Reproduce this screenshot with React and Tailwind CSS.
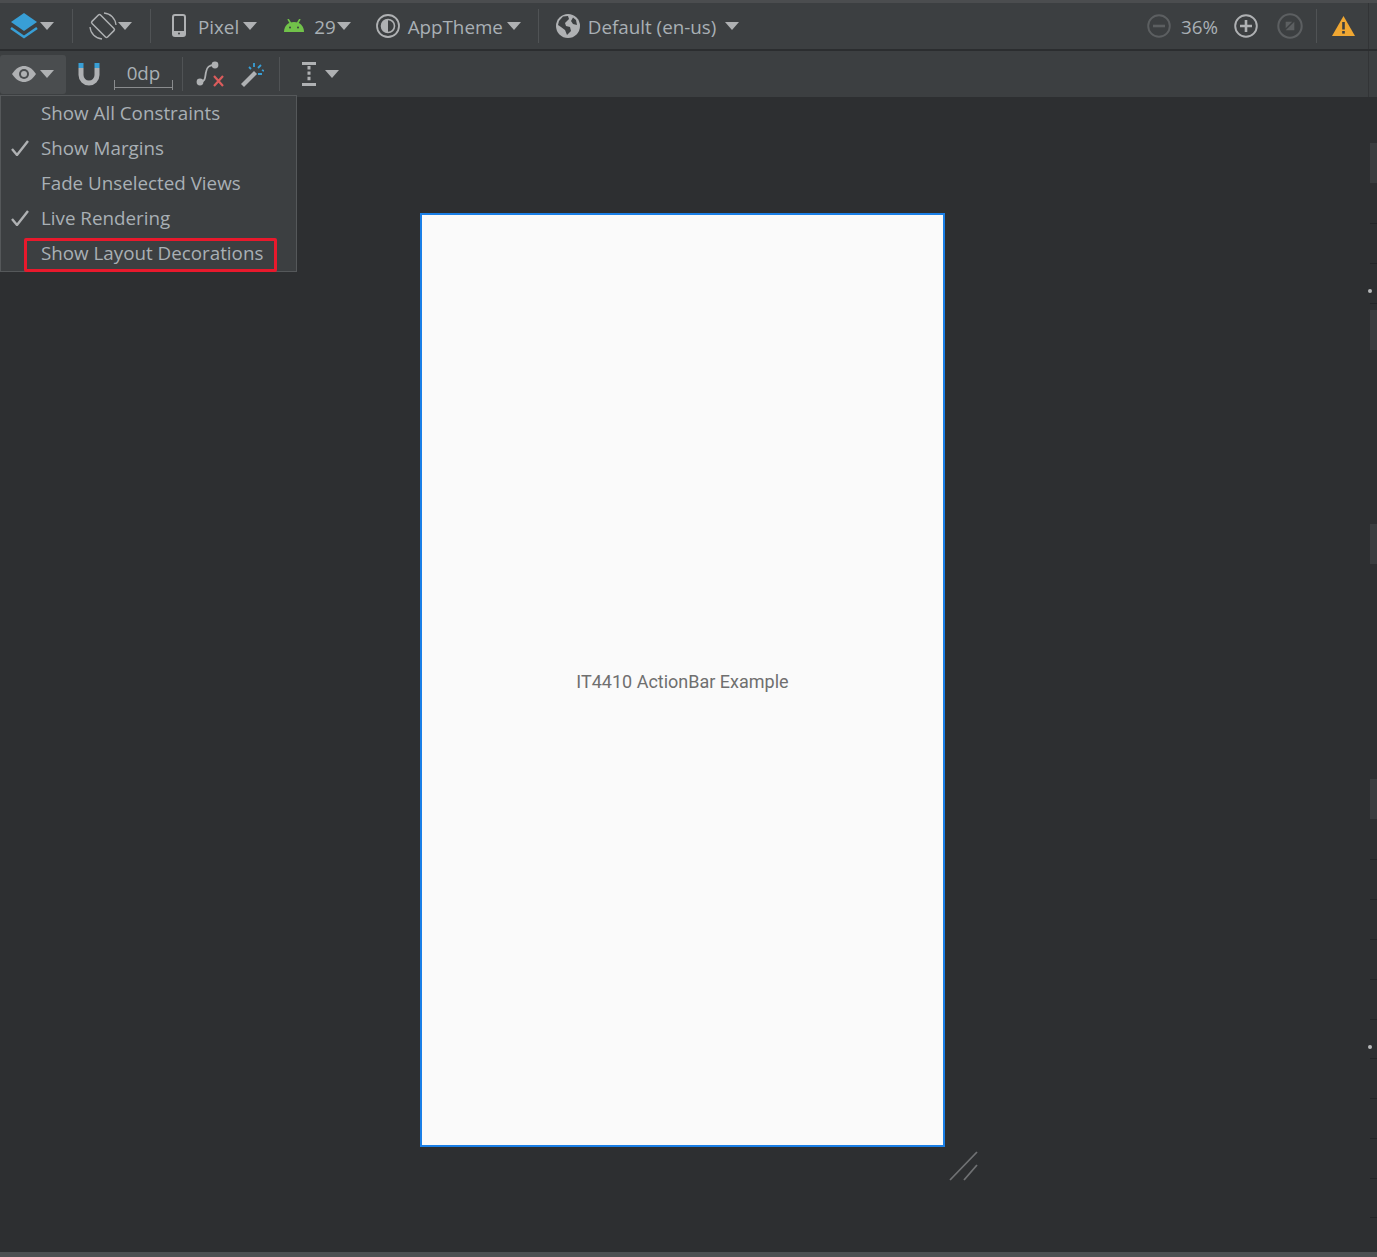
const textFont = "font-['Open_Sans','Noto_Sans',sans-serif]";

const RULER_BLOCKS = [143, 310, 524, 779];
const RULER_TICKS = [223, 263, 303, 859, 899, 939, 979, 1019, 1058, 1098, 1138, 1178, 1217];
const RULER_DOTS = [289, 1045];

function Caret({ className = '' }) {
  return (
    <svg width="14" height="8" viewBox="0 0 14 8" className={'shrink-0 ' + className}>
      <path d="M0 0H14L7 8Z" fill="#afb1b3" />
    </svg>
  );
}

function Divider({ className = '' }) {
  return <div className={'w-px h-[34px] shrink-0 bg-[#505355] ' + className} />;
}

function Label({ className = '', children }) {
  return <span className={'text-[18.8px] leading-none whitespace-nowrap text-[#a9b0b5] shrink-0 ' + textFont + ' ' + className}>{children}</span>;
}

function LayersIcon() {
  return (
    <svg width="28" height="26" viewBox="0 0 28 26" className="ml-[10px] shrink-0">
      <path d="M14 0L27 9L14 18L1 9Z" fill="#389fd6" />
      <path d="M1 15L14 24L27 15" fill="none" stroke="#389fd6" strokeWidth="2.6" />
    </svg>
  );
}

function RotateIcon() {
  return (
    <svg width="28" height="28" viewBox="0 0 28 28" className="ml-[16px] shrink-0">
      <rect x="8" y="3" width="12" height="22" rx="1.5" transform="rotate(-45 14 14)" fill="none" stroke="#afb1b3" strokeWidth="1.5" />
      <path d="M15 1A13 13 0 0 1 27 13M1 15A13 13 0 0 0 13 27" fill="none" stroke="#afb1b3" strokeWidth="1.3" />
    </svg>
  );
}

function PhoneIcon() {
  return (
    <svg width="14" height="24" viewBox="0 0 14 24" className="ml-[21px] shrink-0">
      <rect x="1" y="1" width="12" height="21" rx="2" fill="none" stroke="#afb1b3" strokeWidth="2" />
      <rect x="1" y="17" width="12" height="5" fill="#afb1b3" />
      <circle cx="7" cy="19.5" r="1" fill="#3c3f41" />
    </svg>
  );
}

function AndroidIcon() {
  return (
    <svg width="20" height="14" viewBox="0 0 20 14" className="ml-[27px] shrink-0">
      <path d="M0 13C0 7 4 3 10 3C16 3 20 7 20 13Z" fill="#71c24a" />
      <path d="M4 0L7 5M16 0L13 5" stroke="#71c24a" strokeWidth="1.6" />
      <circle cx="6" cy="8.5" r="1" fill="#3c3f41" />
      <circle cx="14" cy="8.5" r="1" fill="#3c3f41" />
    </svg>
  );
}

function ThemeIcon() {
  return (
    <svg width="24" height="24" viewBox="0 0 24 24" className="ml-[25px] shrink-0">
      <circle cx="12" cy="12" r="11" fill="none" stroke="#afb1b3" strokeWidth="1.8" />
      <circle cx="12" cy="12" r="6.5" fill="none" stroke="#afb1b3" strokeWidth="1.6" />
      <path d="M12 5.5A6.5 6.5 0 0 0 12 18.5Z" fill="#afb1b3" />
    </svg>
  );
}

function GlobeIcon() {
  return (
    <svg width="24" height="24" viewBox="0 0 24 24" className="ml-[17px] shrink-0">
      <circle cx="12" cy="12" r="12" fill="#afb1b3" />
      <path d="M7 2.5L12 2L13 5L9 9L10 12L14 13L15 17L11 21L9 16L5 13L2 11L3 7ZM17 3.5L20 6L21 11L17 10L15 7Z" fill="#3c3f41" />
    </svg>
  );
}

function ZoomCircle({ className = '', color, size = 24, children }) {
  return (
    <svg width={size} height={size} viewBox="0 0 24 24" className={'shrink-0 ' + className}>
      <circle cx="12" cy="12" r="10.8" fill="none" stroke={color} strokeWidth="1.9" />
      {children}
    </svg>
  );
}

function WarningIcon() {
  return (
    <svg width="23" height="20" viewBox="0 0 23 20" className="ml-[15px] shrink-0">
      <path d="M11.5 0L23 20H0Z" fill="#f0a732" />
      <rect x="10.2" y="6" width="2.6" height="7.5" fill="#3c3f41" />
      <rect x="10.2" y="15" width="2.6" height="2.6" fill="#3c3f41" />
    </svg>
  );
}

function EyeIcon() {
  return (
    <svg width="24" height="16" viewBox="0 0 24 16" className="ml-[12px] shrink-0">
      <path d="M0 8C4 2 8 0 12 0C16 0 20 2 24 8C20 14 16 16 12 16C8 16 4 14 0 8Z" fill="#afb1b3" />
      <circle cx="12" cy="8" r="5" fill="#4a4d4f" />
      <circle cx="12" cy="8" r="3" fill="#afb1b3" />
    </svg>
  );
}

function MagnetIcon() {
  return (
    <svg width="22" height="23" viewBox="0 0 22 23" className="ml-[12px] shrink-0">
      <path d="M3 5V12A8 8 0 0 0 19 12V5" fill="none" stroke="#afb1b3" strokeWidth="5" />
      <rect x="0.5" y="0" width="5" height="5" fill="#389fd6" />
      <rect x="16.5" y="0" width="5" height="5" fill="#389fd6" />
    </svg>
  );
}

function ClearConstraintsIcon() {
  return (
    <svg width="28" height="26" viewBox="0 0 28 26" className="ml-[13px] shrink-0">
      <path d="M4 21C10 21 9 15 10 11C11 6 13 4 19 4" fill="none" stroke="#afb1b3" strokeWidth="1.8" />
      <circle cx="4" cy="21" r="3.4" fill="#afb1b3" />
      <circle cx="19" cy="4" r="3.4" fill="#afb1b3" />
      <path d="M18 15L27 25M27 15L18 25" stroke="#db5c5c" strokeWidth="2.2" />
    </svg>
  );
}

function WandIcon() {
  return (
    <svg width="24" height="25" viewBox="0 0 24 25" className="ml-[16px] shrink-0">
      <path d="M1 22L14 9L17 12L4 25Z" fill="#afb1b3" />
      <path d="M13 2V6M21 13H17M20 4L17 7M8 6L10 8M21 9L23 10" stroke="#389fd6" strokeWidth="1.8" transform="translate(1 -1)" />
    </svg>
  );
}

function MarginIcon() {
  return (
    <svg width="14" height="24" viewBox="0 0 14 24" className="ml-[22px] shrink-0">
      <rect x="0" y="0" width="14" height="3" fill="#afb1b3" />
      <rect x="0" y="21" width="14" height="3" fill="#afb1b3" />
      <path d="M7 4V20" stroke="#afb1b3" strokeWidth="3" strokeDasharray="3.4 2" />
    </svg>
  );
}

function RightEdge() {
  return (
    <>
      <div className="flex-1" />
      <div className="w-px self-stretch bg-[#323436] shrink-0" />
      <div className="w-[8px] shrink-0" />
    </>
  );
}

function TopBar() {
  return (
    <div className="flex items-center h-[46px] bg-[#3c3f41]">
      <LayersIcon />
      <Caret className="ml-[2px]" />
      <Divider className="ml-[18px]" />
      <RotateIcon />
      <Caret className="ml-[1px]" />
      <Divider className="ml-[18px]" />
      <PhoneIcon />
      <Label className="ml-[12px] mt-[2px]">Pixel</Label>
      <Caret className="ml-[4px]" />
      <AndroidIcon />
      <Label className="ml-[10px] mt-[2px]">29</Label>
      <Caret className="ml-[1px]" />
      <ThemeIcon />
      <Label className="ml-[8px] mt-[2px]">AppTheme</Label>
      <Caret className="ml-[4px]" />
      <Divider className="ml-[17px]" />
      <GlobeIcon />
      <Label className="ml-[8px] mt-[2px]">Default (en-us)</Label>
      <Caret className="ml-[9px]" />
      <div className="flex-1" />
      <ZoomCircle color="#5c5f61">
        <rect x="6" y="10.7" width="12" height="2.6" fill="#5c5f61" />
      </ZoomCircle>
      <Label className="ml-[10px] mt-[2px]">36%</Label>
      <ZoomCircle color="#afb1b3" className="ml-[16px]">
        <path d="M6 12H18M12 6V18" stroke="#afb1b3" strokeWidth="2.6" />
      </ZoomCircle>
      <ZoomCircle color="#5c5f61" size={26} className="ml-[19px]">
        <path d="M8 16L16 8V16Z" fill="#5c5f61" />
        <path d="M8 14V8H14Z" fill="#5c5f61" />
      </ZoomCircle>
      <Divider className="ml-[13px]" />
      <WarningIcon />
      <div className="w-[13px] shrink-0" />
      <div className="w-px self-stretch bg-[#323436] shrink-0" />
      <div className="w-[8px] shrink-0" />
    </div>
  );
}

function SecondBar() {
  return (
    <div className="flex items-center h-[46px] bg-[#3c3f41]">
      <div className="flex items-center w-[66px] h-[39px] shrink-0 rounded-[3px] bg-[#4a4d4f]">
        <EyeIcon />
        <Caret className="ml-[4px]" />
      </div>
      <MagnetIcon />
      <div className="relative w-[59px] h-[30px] ml-[14px] shrink-0 flex justify-center">
        <Label className="mt-[5px]">0dp</Label>
        <svg width="59" height="10" viewBox="0 0 59 10" className="absolute left-0 bottom-[-1px]">
          <path d="M0.5 0V10M58.5 0V10M0 7.5H59" stroke="#8a8c8e" strokeWidth="1" fill="none" />
        </svg>
      </div>
      <Divider className="ml-[9px]" />
      <ClearConstraintsIcon />
      <WandIcon />
      <Divider className="ml-[15px]" />
      <MarginIcon />
      <Caret className="ml-[9px]" />
      <RightEdge />
    </div>
  );
}

function MenuRow({ checked, children }) {
  return (
    <div className="flex items-center h-[35px] pl-[40px] relative">
      {checked && (
        <svg width="18" height="16" viewBox="0 0 18 16" className="absolute left-[10px] top-[9px]">
          <path d="M1 9L6 15L17 1" fill="none" stroke="#afb1b3" strokeWidth="2.4" />
        </svg>
      )}
      <Label>{children}</Label>
    </div>
  );
}

function ViewOptionsMenu() {
  return (
    <div className="absolute left-0 top-[95px] w-[297px] h-[177px] bg-[#3c3f41] border border-[#55585a] z-10">
      <MenuRow>Show All Constraints</MenuRow>
      <MenuRow checked>Show Margins</MenuRow>
      <MenuRow>Fade Unselected Views</MenuRow>
      <MenuRow checked>Live Rendering</MenuRow>
      <MenuRow>Show Layout Decorations</MenuRow>
      <div className="absolute left-[23px] top-[142px] w-[253px] h-[34px] border-[3px] border-[#e8192c] rounded-[2px]" />
    </div>
  );
}

function Ruler() {
  return (
    <div className="absolute right-0 top-0 w-[7px] h-full">
      {RULER_BLOCKS.map((y) => (
        <div key={y} className="absolute left-0 w-[7px] h-[40px] bg-[#3a3d3f]" style={{ top: y }} />
      ))}
      {RULER_TICKS.map((y) => (
        <div key={y} className="absolute left-0 w-[7px] h-px bg-[#232527]" style={{ top: y }} />
      ))}
      {RULER_DOTS.map((y) => (
        <div key={y} className="absolute left-[-2px] w-[4px] h-[4px] rounded-full bg-[#b5b7b9]" style={{ top: y }} />
      ))}
    </div>
  );
}

function PhoneFrame() {
  return (
    <div className="relative w-[525px] h-[934px] bg-[#fafafa] border-2 border-[#1a7fe6] flex items-center justify-center">
      <span className="text-[18px] leading-none text-[#6f6f6f] font-['Roboto',sans-serif] mt-[3px]">IT4410 ActionBar Example</span>
      <svg width="30" height="30" viewBox="0 0 30 30" className="absolute left-[527px] top-[936px]">
        <path d="M1 29L28 1M15 29L28 14" stroke="#6f7173" strokeWidth="1.8" />
      </svg>
    </div>
  );
}

export default function App() {
  return (
    <div className="relative w-[1377px] h-[1257px] overflow-hidden bg-[#2d2f31] flex flex-col">
      <div className="h-[3px] shrink-0 bg-[#4b4d4f]" />
      <TopBar />
      <div className="h-[2px] shrink-0 bg-[#2b2d2f]" />
      <SecondBar />
      <div className="flex-1 pl-[420px] pt-[116px]">
        <PhoneFrame />
      </div>
      <div className="h-[5px] shrink-0 bg-[#4d5052]" />
      <ViewOptionsMenu />
      <Ruler />
    </div>
  );
}
